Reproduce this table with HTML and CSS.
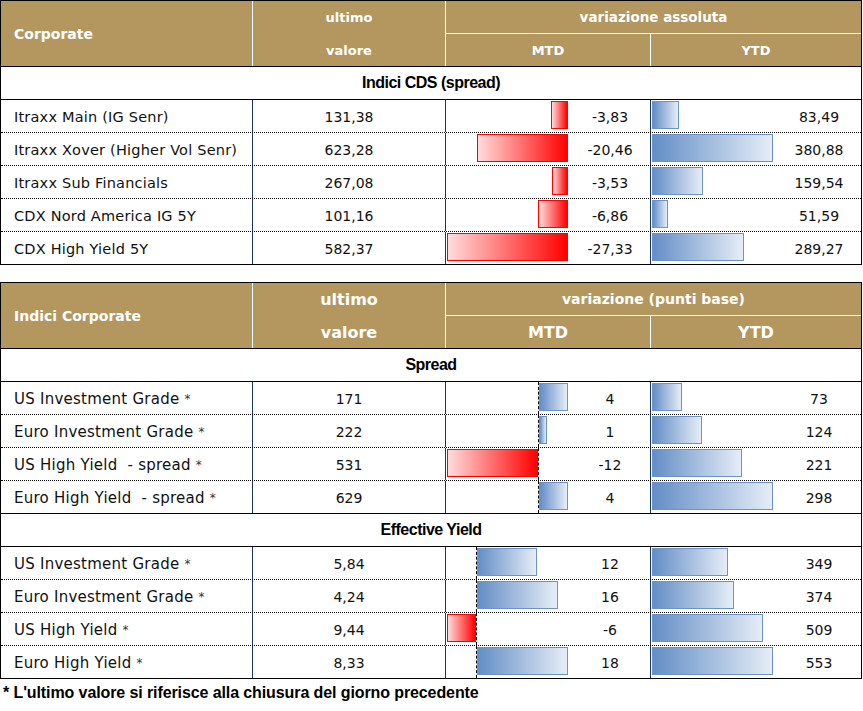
FILE: index.html
```html
<!DOCTYPE html>
<html lang="it">
<head>
<meta charset="utf-8">
<title>Corporate</title>
<link rel="stylesheet" href="styles.css">
</head>
<body>
<div class="page">

  <div class="tbl">
    <div class="head">
      <div class="h-name">Corporate</div>
      <div class="h-val"><span>ultimo</span><span>valore</span></div>
      <div class="h-var">
        <div class="h-var-title">variazione assoluta</div>
        <div class="h-sub"><div class="h-mtd">MTD</div><div class="h-ytd">YTD</div></div>
      </div>
    </div>
    <div class="section">Indici CDS (spread)</div>

    <div class="row first">
      <div class="c-name">Itraxx Main (IG Senr)</div>
      <div class="c-val">131,38</div>
      <div class="c-mtd"><div class="bars"><div class="neg" style="width:121px"><div class="bar red" style="width:17px"></div></div></div><div class="num">-3,83</div></div>
      <div class="c-ytd"><div class="bars"><div class="pos"><div class="bar blue" style="width:27px"></div></div></div><div class="num">83,49</div></div>
    </div>
    <div class="row">
      <div class="c-name">Itraxx Xover (Higher Vol Senr)</div>
      <div class="c-val">623,28</div>
      <div class="c-mtd"><div class="bars"><div class="neg" style="width:121px"><div class="bar red" style="width:91px"></div></div></div><div class="num">-20,46</div></div>
      <div class="c-ytd"><div class="bars"><div class="pos"><div class="bar blue" style="width:121px"></div></div></div><div class="num">380,88</div></div>
    </div>
    <div class="row">
      <div class="c-name">Itraxx Sub Financials</div>
      <div class="c-val">267,08</div>
      <div class="c-mtd"><div class="bars"><div class="neg" style="width:121px"><div class="bar red" style="width:16px"></div></div></div><div class="num">-3,53</div></div>
      <div class="c-ytd"><div class="bars"><div class="pos"><div class="bar blue" style="width:51px"></div></div></div><div class="num">159,54</div></div>
    </div>
    <div class="row">
      <div class="c-name">CDX Nord America IG 5Y</div>
      <div class="c-val">101,16</div>
      <div class="c-mtd"><div class="bars"><div class="neg" style="width:121px"><div class="bar red" style="width:30px"></div></div></div><div class="num">-6,86</div></div>
      <div class="c-ytd"><div class="bars"><div class="pos"><div class="bar blue" style="width:16px"></div></div></div><div class="num">51,59</div></div>
    </div>
    <div class="row">
      <div class="c-name">CDX High Yield 5Y</div>
      <div class="c-val">582,37</div>
      <div class="c-mtd"><div class="bars"><div class="neg" style="width:121px"><div class="bar red" style="width:121px"></div></div></div><div class="num">-27,33</div></div>
      <div class="c-ytd"><div class="bars"><div class="pos"><div class="bar blue" style="width:92px"></div></div></div><div class="num">289,27</div></div>
    </div>
  </div>

  <div class="tbl t2">
    <div class="head">
      <div class="h-name">Indici Corporate</div>
      <div class="h-val big"><span>ultimo</span><span>valore</span></div>
      <div class="h-var">
        <div class="h-var-title wide">variazione (punti base)</div>
        <div class="h-sub big"><div class="h-mtd">MTD</div><div class="h-ytd">YTD</div></div>
      </div>
    </div>
    <div class="section">Spread</div>

    <div class="row first">
      <div class="c-name">US Investment Grade <span class="ast">*</span></div>
      <div class="c-val">171</div>
      <div class="c-mtd"><div class="bars"><div class="neg" style="width:91px"></div><div class="pos axis"><div class="bar blue" style="width:29px"></div></div></div><div class="num">4</div></div>
      <div class="c-ytd"><div class="bars"><div class="pos"><div class="bar blue" style="width:30px"></div></div></div><div class="num">73</div></div>
    </div>
    <div class="row">
      <div class="c-name">Euro Investment Grade <span class="ast">*</span></div>
      <div class="c-val">222</div>
      <div class="c-mtd"><div class="bars"><div class="neg" style="width:91px"></div><div class="pos axis"><div class="bar blue" style="width:8px"></div></div></div><div class="num">1</div></div>
      <div class="c-ytd"><div class="bars"><div class="pos"><div class="bar blue" style="width:50px"></div></div></div><div class="num">124</div></div>
    </div>
    <div class="row">
      <div class="c-name">US High Yield &nbsp;- spread <span class="ast">*</span></div>
      <div class="c-val">531</div>
      <div class="c-mtd"><div class="bars"><div class="neg" style="width:91px"><div class="bar red" style="width:91px"></div></div><div class="pos axis"></div></div><div class="num">-12</div></div>
      <div class="c-ytd"><div class="bars"><div class="pos"><div class="bar blue" style="width:90px"></div></div></div><div class="num">221</div></div>
    </div>
    <div class="row">
      <div class="c-name">Euro High Yield &nbsp;- spread <span class="ast">*</span></div>
      <div class="c-val">629</div>
      <div class="c-mtd"><div class="bars"><div class="neg" style="width:91px"></div><div class="pos axis"><div class="bar blue" style="width:29px"></div></div></div><div class="num">4</div></div>
      <div class="c-ytd"><div class="bars"><div class="pos"><div class="bar blue" style="width:121px"></div></div></div><div class="num">298</div></div>
    </div>

    <div class="section">Effective Yield</div>

    <div class="row first">
      <div class="c-name">US Investment Grade <span class="ast">*</span></div>
      <div class="c-val">5,84</div>
      <div class="c-mtd"><div class="bars"><div class="neg" style="width:29px"></div><div class="pos axis"><div class="bar blue" style="width:60px"></div></div></div><div class="num">12</div></div>
      <div class="c-ytd"><div class="bars"><div class="pos"><div class="bar blue" style="width:76px"></div></div></div><div class="num">349</div></div>
    </div>
    <div class="row">
      <div class="c-name">Euro Investment Grade <span class="ast">*</span></div>
      <div class="c-val">4,24</div>
      <div class="c-mtd"><div class="bars"><div class="neg" style="width:29px"></div><div class="pos axis"><div class="bar blue" style="width:81px"></div></div></div><div class="num">16</div></div>
      <div class="c-ytd"><div class="bars"><div class="pos"><div class="bar blue" style="width:82px"></div></div></div><div class="num">374</div></div>
    </div>
    <div class="row">
      <div class="c-name">US High Yield <span class="ast">*</span></div>
      <div class="c-val">9,44</div>
      <div class="c-mtd"><div class="bars"><div class="neg" style="width:29px"><div class="bar red" style="width:29px"></div></div><div class="pos axis"></div></div><div class="num">-6</div></div>
      <div class="c-ytd"><div class="bars"><div class="pos"><div class="bar blue" style="width:111px"></div></div></div><div class="num">509</div></div>
    </div>
    <div class="row">
      <div class="c-name">Euro High Yield <span class="ast">*</span></div>
      <div class="c-val">8,33</div>
      <div class="c-mtd"><div class="bars"><div class="neg" style="width:29px"></div><div class="pos axis"><div class="bar blue" style="width:91px"></div></div></div><div class="num">18</div></div>
      <div class="c-ytd"><div class="bars"><div class="pos"><div class="bar blue" style="width:121px"></div></div></div><div class="num">553</div></div>
    </div>
  </div>

  <p class="note">* L'ultimo valore si riferisce alla chiusura del giorno precedente</p>
</div>
</body>
</html>
```

FILE: styles.css
```css
html, body {
  margin: 0;
  padding: 0;
  background: #ffffff;
}

.page {
  width: 862px;
  font-family: "DejaVu Sans", "Noto Sans", sans-serif;
  color: #111111;
}

.tbl {
  width: 862px;
  box-sizing: border-box;
  border: 1px solid #000000;
}

.t2 {
  margin-top: 17px;
}

/* header */
.head {
  display: grid;
  grid-template-columns: 251px 193px 416px;
  height: 65px;
  background: #b4975e;
  color: #ffffff;
  font-weight: bold;
}

.h-name {
  display: flex;
  align-items: center;
  padding-left: 13px;
  font-size: 14px;
}

.h-val {
  border-left: 1px solid #ffffff;
  display: grid;
  grid-template-rows: 33px 32px;
  font-size: 13px;
}

.h-val span {
  display: flex;
  align-items: center;
  justify-content: center;
}

.h-var {
  border-left: 1px solid #ffffff;
  display: grid;
  grid-template-rows: 33px 32px;
}

.h-var-title {
  display: flex;
  align-items: center;
  justify-content: center;
  border-bottom: 1px solid #ffffff;
  font-size: 13.5px;
}

.h-var-title.wide {
  font-size: 14px;
}

.h-sub {
  display: grid;
  grid-template-columns: 204px 211px;
  font-size: 13px;
}

.h-sub div {
  display: flex;
  align-items: center;
  justify-content: center;
}

.h-ytd {
  border-left: 1px solid #ffffff;
}

.h-val.big,
.h-sub.big {
  font-size: 16px;
}

/* section title */
.section {
  height: 33px;
  box-sizing: border-box;
  border-top: 1px solid #000000;
  display: flex;
  align-items: center;
  justify-content: center;
  font-family: "Liberation Sans", Arial, sans-serif;
  font-weight: bold;
  font-size: 16px;
  letter-spacing: -0.5px;
  color: #000000;
}

/* data rows */
.row {
  display: grid;
  grid-template-columns: 251px 193px 205px 211px;
  height: 33px;
  box-sizing: border-box;
  border-top: 1px dotted #000000;
  font-size: 14px;
}

.row.first {
  border-top: 1px solid #000000;
}

.c-name {
  display: flex;
  align-items: center;
  padding-left: 13px;
  padding-top: 2px;
  white-space: pre;
  font-size: 14.5px;
  letter-spacing: 0.2px;
}

.t2 .c-name {
  font-size: 15px;
  letter-spacing: 0.25px;
}

.ast {
  color: #333333;
  font-size: 12px;
}

.c-val {
  border-left: 1px solid #17375e;
  display: flex;
  align-items: center;
  justify-content: center;
  padding-top: 2px;
}

.c-mtd,
.c-ytd {
  border-left: 1px solid #17375e;
  display: flex;
}

.bars {
  display: flex;
  width: 121px;
  margin-left: 1px;
  flex: none;
}

.neg {
  display: flex;
  justify-content: flex-end;
  align-items: flex-start;
  flex: none;
}

.pos {
  flex: 1;
  display: flex;
  align-items: flex-start;
}

.pos.axis {
  border-left: 1px dashed #000000;
}

.bar {
  height: 28px;
  margin-top: 1px;
  box-sizing: border-box;
  flex: none;
}

.bar.red {
  border: 1px solid #ff0000;
  background: linear-gradient(to right, #ffdcdc, #ff0000);
}

.bar.blue {
  border: 1px solid #6b92c9;
  background: linear-gradient(to right, #638ec6, #e6edf7);
}

.num {
  flex: 1;
  display: flex;
  align-items: center;
  justify-content: center;
  padding-top: 2px;
}

.c-mtd .num {
  padding-left: 2px;
}

.c-ytd .num {
  padding-left: 4px;
}

/* footnote */
.note {
  margin: 5px 0 0 3px;
  font-family: "Liberation Sans", Arial, sans-serif;
  font-weight: bold;
  font-size: 16px;
  letter-spacing: -0.1px;
  color: #000000;
}
```
